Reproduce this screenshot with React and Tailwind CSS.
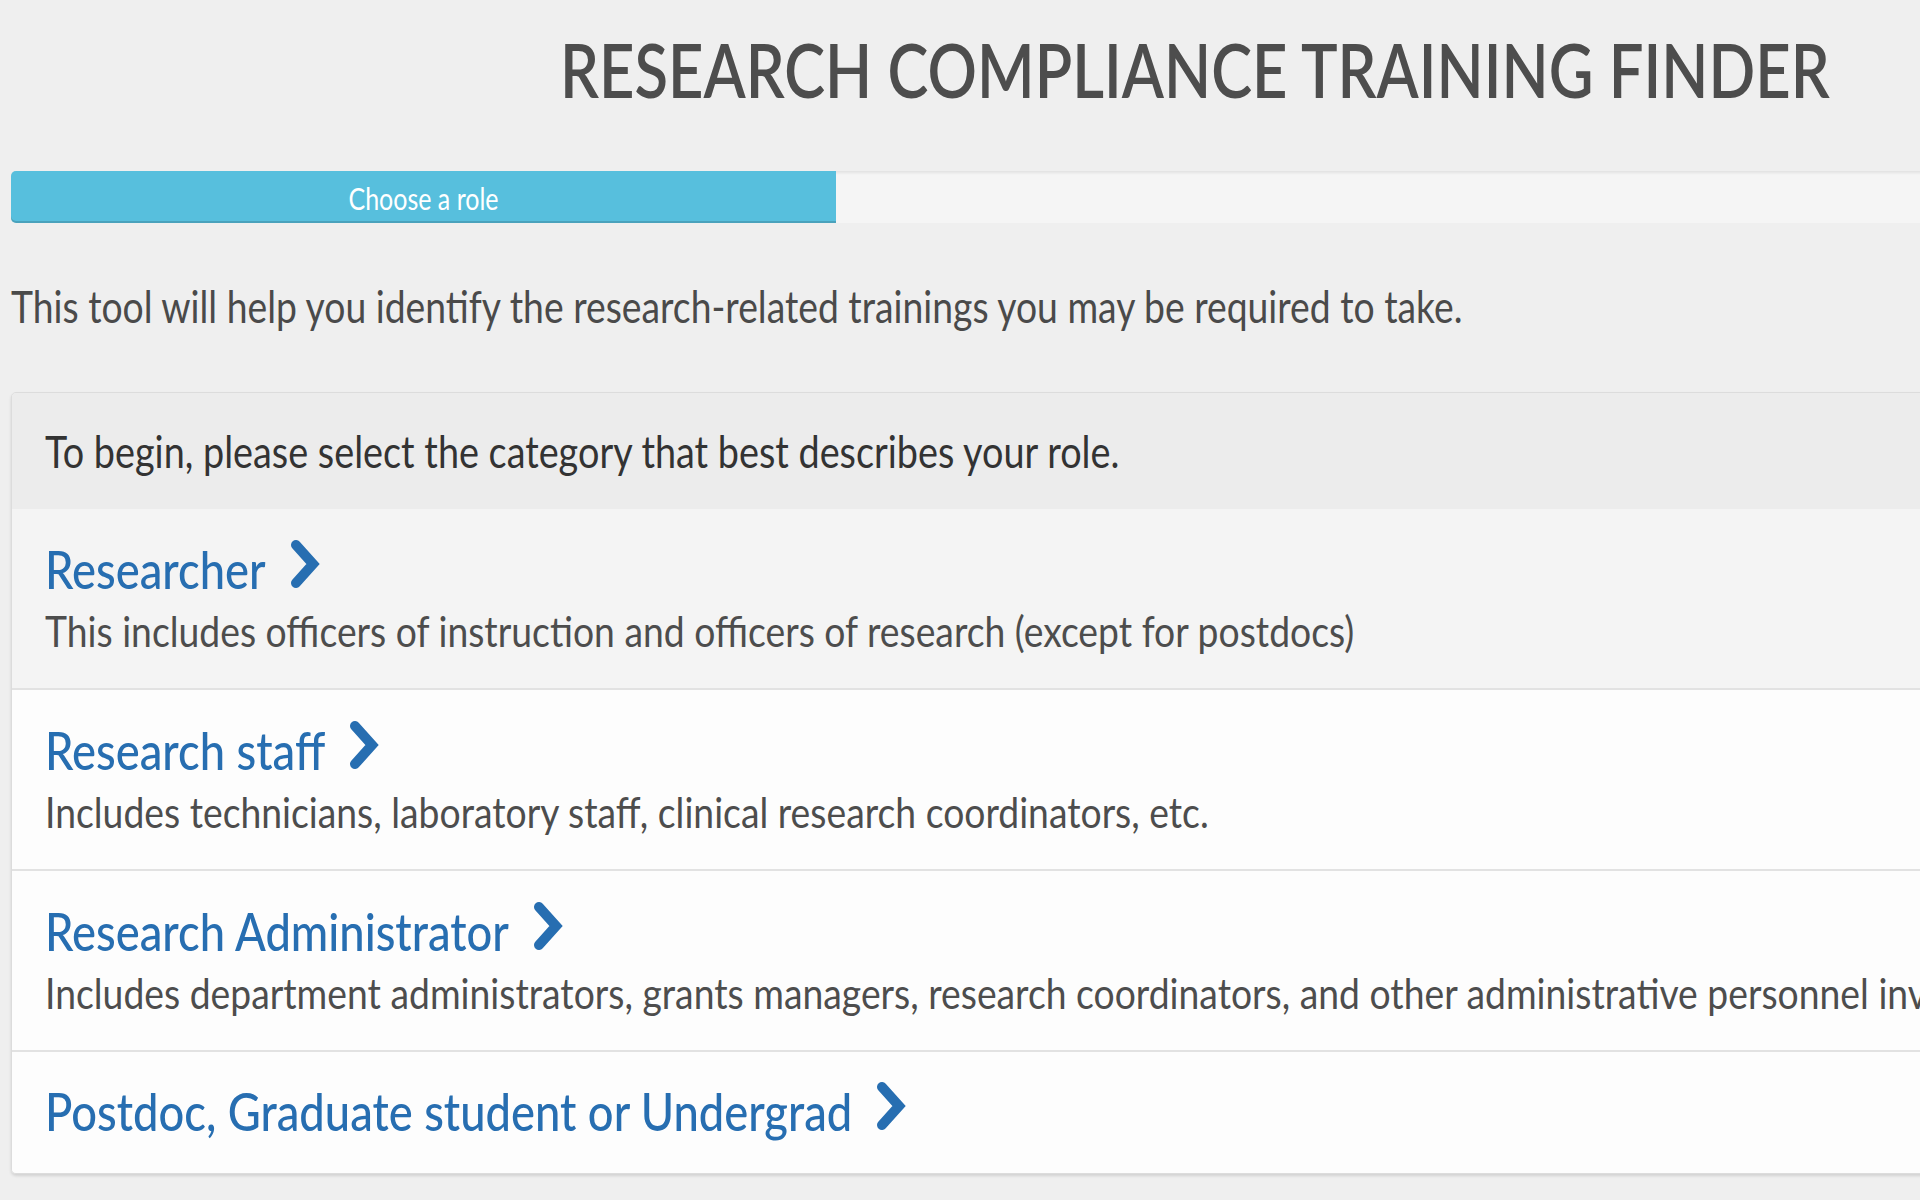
import { Fragment } from "react";

const roles = [
  {
    title: "Researcher",
    text: "This includes officers of instruction and officers of research (except for postdocs)",
    active: true,
  },
  {
    title: "Research staff",
    text: "Includes technicians, laboratory staff, clinical research coordinators, etc.",
  },
  {
    title: "Research Administrator",
    text: "Includes department administrators, grants managers, research coordinators, and other administrative personnel involved in research.",
  },
  {
    title: "Postdoc, Graduate student or Undergrad",
  },
];

function Chevron() {
  return (
    <svg width="31" height="50" viewBox="0 0 31 50" className="ml-[23px] -mt-[10px] shrink-0">
      <polyline
        points="7,6 24,25 7,44"
        fill="none"
        stroke="#276eb1"
        strokeWidth="10"
        strokeLinecap="round"
        strokeLinejoin="miter"
      />
    </svg>
  );
}

function RoleRow({ role, last }) {
  return (
    <a
      href="#"
      className={
        "block pl-[33px] " +
        (role.active ? "bg-[#f4f4f4] " : "bg-[#fdfdfd] ") +
        (last ? "pt-[29px] pb-[32px]" : "pt-[30px] pb-[25px] border-b-2 border-[#e2e2e2]")
      }
    >
      <div className="flex items-center h-[60px]">
        <span className="inline-block origin-center scale-y-[1.15] text-[45.3px] leading-[60px] font-medium text-[#276eb1] whitespace-nowrap">
          {role.title}
        </span>
        <Chevron />
      </div>
      {role.text && (
        <p className="origin-center scale-y-[1.12] text-[37.3px] leading-[64px] text-[#4d4d4d] whitespace-nowrap">
          {role.text}
        </p>
      )}
    </a>
  );
}

export default function App() {
  return (
    <div className="min-h-screen w-full overflow-hidden bg-[#efefef] font-['Lato','Liberation_Sans',sans-serif]">
      <div className="pl-[11px]">
        {/* title */}
        <header className="pt-[29px] pl-[549px] h-[171px]">
          <h1 className="inline-block origin-center scale-y-[1.22] text-[61.5px] leading-[80px] font-semibold text-[#4d4d4d] whitespace-nowrap">
            RESEARCH COMPLIANCE TRAINING FINDER
          </h1>
        </header>

        {/* progress */}
        <div className="w-[2100px] h-[52px] rounded-[5px] bg-[#f5f5f5] shadow-[inset_0_2px_3px_rgba(0,0,0,0.08)] flex">
          <div className="w-[825px] h-full rounded-l-[5px] bg-[#57bfdd] shadow-[inset_0_-2px_0_rgba(0,0,0,0.15)] flex items-center justify-center">
            <span className="inline-block origin-center scale-y-[1.25] text-[25px] leading-[52px] text-white">
              Choose a role
            </span>
          </div>
        </div>

        <p className="mt-[59px] origin-center scale-y-[1.2] text-[37.3px] leading-[48px] text-[#4a4a4a] whitespace-nowrap">
          This tool will help you identify the research-related trainings you may be required to take.
        </p>

        {/* roles panel */}
        <div className="mt-[62px] w-[2100px] rounded-[5px] border border-[#dcdcdc] overflow-hidden shadow-[0_2px_3px_rgba(0,0,0,0.12)]">
          <div className="h-[116px] bg-[#ececec] pl-[33px] flex items-center">
            <p className="origin-center scale-y-[1.18] text-[37.8px] leading-[48px] text-[#333333] whitespace-nowrap">
              To begin, please select the category that best describes your role.
            </p>
          </div>
          {roles.map((role, i) => (
            <Fragment key={role.title}>
              <RoleRow role={role} last={i === roles.length - 1} />
            </Fragment>
          ))}
        </div>
      </div>
    </div>
  );
}
